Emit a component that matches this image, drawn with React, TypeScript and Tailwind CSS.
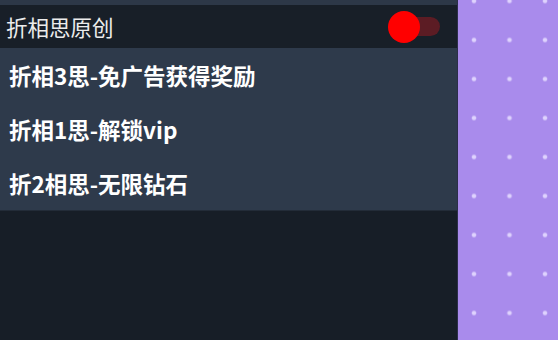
export default function App() {
  const items = ["折相3思-免广告获得奖励", "折相1思-解锁vip", "折2相思-无限钻石"];
  return (
    <div className="w-[558px] h-[340px] flex overflow-hidden" style={{ fontFamily: '"Noto Sans CJK SC", "Noto Sans", sans-serif' }}>
      <div className="w-[457px] flex flex-col bg-[#171e27]">
        <div className="h-[5px] bg-[#2d3848]" />
        <div className="h-[43px] flex items-center justify-between pl-[6px] pr-[17px] bg-[#181f28]">
          <span className="text-[21.5px] leading-none text-[#ececec]">折相思原创</span>
          <div className="relative w-[52px] h-[32px]">
            <div className="absolute right-0 top-[6px] w-[44px] h-[19px] rounded-full bg-[#5c1c24]" />
            <div className="absolute left-0 top-0 w-[32px] h-[32px] rounded-full bg-[#ff0000]" />
          </div>
        </div>
        <div className="flex flex-col bg-[#2e3a4b]">
          {items.map((t) => (
            <div key={t} className="h-[54px] flex items-center pl-[9px]">
              <span className="text-[22.5px] leading-none font-bold text-white">{t}</span>
            </div>
          ))}
        </div>
        <div className="h-px bg-[#232c38]" />
        <div className="flex-1" />
      </div>
      <div className="w-px bg-[#2c2f48]" />
      <div className="flex-1 bg-[#a98bec] bg-[radial-gradient(circle,rgba(228,218,255,0.9)_1.6px,rgba(228,218,255,0)_2.8px)] bg-[length:35.5px_39px] bg-[position:-1.75px_20.5px]" />
    </div>
  );
}
